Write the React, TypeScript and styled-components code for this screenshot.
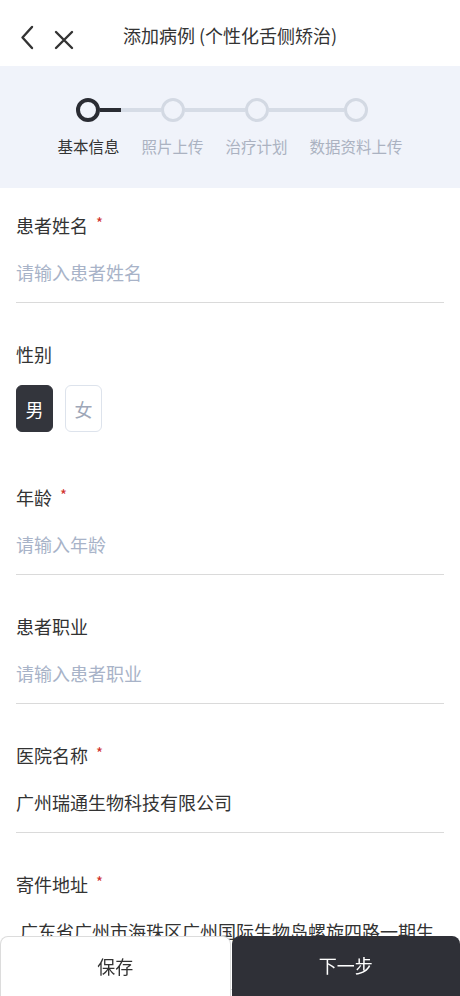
import React from "react";
import styled, { createGlobalStyle } from "styled-components";

const GlobalStyle = createGlobalStyle`
  * { box-sizing: border-box; }
  html, body { margin: 0; padding: 0; background: #ffffff; }
  body {
    font-family: "Noto Sans CJK SC", "Noto Sans", "Liberation Sans", sans-serif;
    color: #333333;
  }
`;

const Page = styled.div`
  height: 100vh;
  overflow: hidden;
  display: flex;
  flex-direction: column;
  background: #ffffff;
`;

const Header = styled.header`
  height: 66px;
  flex-shrink: 0;
  position: relative;
  display: flex;
  align-items: center;
  justify-content: center;
`;

const NavIcons = styled.div`
  position: absolute;
  left: 20px;
  top: 24px;
  display: flex;
  align-items: center;
  gap: 20px;
`;

const Title = styled.h1`
  margin: 0;
  font-size: 18px;
  font-weight: 400;
  line-height: 26px;
  color: #333333;
  margin-top: 4px;
`;

const Stepper = styled.div`
  flex-shrink: 0;
  height: 122px;
  background: #f0f3fa;
  display: flex;
  justify-content: center;
  padding-top: 32px;
`;

const Step = styled.div`
  display: flex;
  flex-direction: column;
  align-items: stretch;
  padding: 0 11px;
`;

const CircleRow = styled.div`
  display: flex;
  align-items: center;
  height: 24px;
  margin: 0 -11px;
`;

const Line = styled.div<{ $hidden?: boolean; $dark?: boolean }>`
  flex: 1;
  height: 4px;
  background: ${(p) =>
    p.$hidden
      ? "transparent"
      : p.$dark
      ? "linear-gradient(to right, #2a2c33 21px, #d6dce6 21px)"
      : "#d6dce6"};
`;

const Circle = styled.div<{ $active?: boolean }>`
  width: 24px;
  height: 24px;
  border-radius: 50%;
  flex-shrink: 0;
  border: ${(p) => (p.$active ? "4px solid #2a2c33" : "3px solid #d3d9e3")};
  background: transparent;
`;

const StepLabel = styled.div<{ $active?: boolean }>`
  margin-top: 13px;
  font-size: 15.5px;
  line-height: 22px;
  text-align: center;
  white-space: nowrap;
  color: ${(p) => (p.$active ? "#333333" : "#abb2c1")};
`;

const Form = styled.div`
  padding: 0 16px;
`;

const Field = styled.div`
  padding: 24px 0 14px;
`;

const Label = styled.div`
  font-size: 18px;
  line-height: 26px;
  color: #333333;
  display: flex;
  align-items: flex-start;
`;

const Required = styled.span`
  color: #d0302b;
  font-size: 15px;
  line-height: 18px;
  margin-left: 8px;
  margin-top: 2px;
`;

const InputRow = styled.div`
  margin-top: 12px;
  padding: 8px 0 16px;
  border-bottom: 1px solid #dadada;
`;

const TextInput = styled.input`
  display: block;
  width: 100%;
  border: none;
  outline: none;
  padding: 0;
  margin: 0;
  background: transparent;
  font-family: inherit;
  font-size: 18px;
  line-height: 28px;
  height: 28px;
  color: #333333;
  &::placeholder {
    color: #a8b3c8;
  }
`;

const TextArea = styled.textarea`
  display: block;
  width: 100%;
  border: none;
  outline: none;
  resize: none;
  padding: 0 0 0 4px;
  margin: 0;
  background: transparent;
  font-family: inherit;
  font-size: 18px;
  line-height: 28px;
  color: #333333;
  overflow: hidden;
`;

const GenderRow = styled.div`
  display: flex;
  gap: 12px;
  margin: 18px 0 14px;
`;

const GenderButton = styled.button<{ $active?: boolean }>`
  width: 37px;
  height: 47px;
  border-radius: 6px;
  padding: 0;
  font-family: inherit;
  font-size: 18px;
  display: flex;
  align-items: center;
  justify-content: center;
  background: ${(p) => (p.$active ? "#33353c" : "#ffffff")};
  color: ${(p) => (p.$active ? "#ffffff" : "#9ea7b8")};
  border: ${(p) => (p.$active ? "1px solid #33353c" : "1px solid #dde3ec")};
`;

const BottomBar = styled.div`
  position: fixed;
  left: 0;
  right: 0;
  bottom: 0;
  height: 60px;
  display: flex;
  gap: 1px;
`;

const BarButton = styled.button<{ $primary?: boolean }>`
  flex: 1;
  height: 100%;
  font-family: inherit;
  font-size: 18px;
  border-radius: 8px 8px 0 0;
  padding: 0 0 2px;
  background: ${(p) => (p.$primary ? "#2f3037" : "#ffffff")};
  color: ${(p) => (p.$primary ? "#ffffff" : "#333333")};
  border: ${(p) => (p.$primary ? "none" : "1px solid #dcdcdc")};
  border-bottom: none;
`;

const BackIcon = () => (
  <svg width="14" height="25" viewBox="0 0 14 25" fill="none">
    <path d="M12 2 L2.5 12.5 L12 23" stroke="#333" strokeWidth="2.4" strokeLinecap="round" strokeLinejoin="round" />
  </svg>
);

const CloseIcon = () => (
  <svg width="20" height="20" viewBox="0 0 20 20" fill="none" style={{ marginTop: 6 }}>
    <path d="M2 2 L18 18 M18 2 L2 18" stroke="#333" strokeWidth="2.4" strokeLinecap="round" />
  </svg>
);

const steps = ["基本信息", "照片上传", "治疗计划", "数据资料上传"];

export default function App() {
  return (
    <Page>
      <GlobalStyle />
      <Header>
        <NavIcons>
          <BackIcon />
          <CloseIcon />
        </NavIcons>
        <Title>添加病例 (个性化舌侧矫治)</Title>
      </Header>

      <Stepper>
        {steps.map((s, i) => (
          <Step key={s}>
            <CircleRow>
              <Line $hidden={i === 0} />
              <Circle $active={i === 0} />
              <Line $hidden={i === steps.length - 1} $dark={i === 0} />
            </CircleRow>
            <StepLabel $active={i === 0}>{s}</StepLabel>
          </Step>
        ))}
      </Stepper>

      <Form>
        <Field>
          <Label>
            患者姓名<Required>*</Required>
          </Label>
          <InputRow>
            <TextInput placeholder="请输入患者姓名" />
          </InputRow>
        </Field>

        <Field>
          <Label>性别</Label>
          <GenderRow>
            <GenderButton $active>男</GenderButton>
            <GenderButton>女</GenderButton>
          </GenderRow>
        </Field>

        <Field>
          <Label>
            年龄<Required>*</Required>
          </Label>
          <InputRow>
            <TextInput placeholder="请输入年龄" />
          </InputRow>
        </Field>

        <Field>
          <Label>患者职业</Label>
          <InputRow>
            <TextInput placeholder="请输入患者职业" />
          </InputRow>
        </Field>

        <Field>
          <Label>
            医院名称<Required>*</Required>
          </Label>
          <InputRow>
            <TextInput defaultValue="广州瑞通生物科技有限公司" />
          </InputRow>
        </Field>

        <Field>
          <Label>
            寄件地址<Required>*</Required>
          </Label>
          <InputRow>
            <TextArea rows={2} defaultValue="广东省广州市海珠区广州国际生物岛螺旋四路一期生产基地" />
          </InputRow>
        </Field>
      </Form>

      <BottomBar>
        <BarButton>保存</BarButton>
        <BarButton $primary>下一步</BarButton>
      </BottomBar>
    </Page>
  );
}
